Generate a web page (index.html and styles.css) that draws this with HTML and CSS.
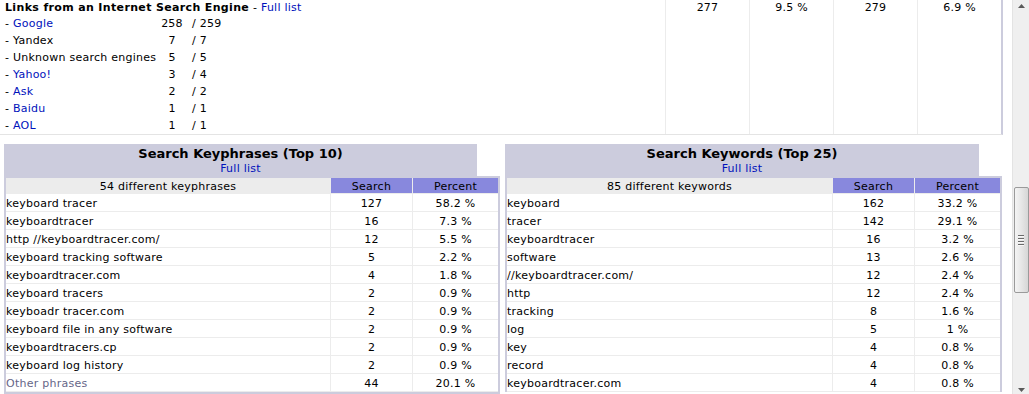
FILE: index.html
```html
<!DOCTYPE html>
<html>
<head>
<meta charset="utf-8">
<title>AWStats - Search</title>
<link rel="stylesheet" href="styles.css">
</head>
<body>
<div class="page">
  <div class="content">
    <section class="engines">
      <div class="eng-main">
        <div class="eng-head"><b>Links from an Internet Search Engine</b> - <a href="#">Full list</a></div>
        <div class="eng-row"><span class="eng-name">- <a href="#">Google</a></span><span class="eng-n">258</span><span class="eng-t">/ 259</span></div>
        <div class="eng-row"><span class="eng-name">- Yandex</span><span class="eng-n">7</span><span class="eng-t">/ 7</span></div>
        <div class="eng-row"><span class="eng-name">- Unknown search engines</span><span class="eng-n">5</span><span class="eng-t">/ 5</span></div>
        <div class="eng-row"><span class="eng-name">- <a href="#">Yahoo!</a></span><span class="eng-n">3</span><span class="eng-t">/ 4</span></div>
        <div class="eng-row"><span class="eng-name">- <a href="#">Ask</a></span><span class="eng-n">2</span><span class="eng-t">/ 2</span></div>
        <div class="eng-row"><span class="eng-name">- <a href="#">Baidu</a></span><span class="eng-n">1</span><span class="eng-t">/ 1</span></div>
        <div class="eng-row"><span class="eng-name">- <a href="#">AOL</a></span><span class="eng-n">1</span><span class="eng-t">/ 1</span></div>
      </div>
      <div class="eng-num">277</div>
      <div class="eng-num">9.5 %</div>
      <div class="eng-num">279</div>
      <div class="eng-num">6.9 %</div>
    </section>

    <div class="pair">
      <section class="box box-left">
        <div class="box-top">
          <div class="box-title"><div class="title-main">Search Keyphrases (Top 10)</div><div class="title-link"><a href="#">Full list</a></div></div>
          <div class="box-blank"></div>
        </div>
        <div class="data">
          <div class="cell hd name">54 different keyphrases</div><div class="cell hd num">Search</div><div class="cell hd num">Percent</div>
          <div class="cell name">keyboard tracer</div><div class="cell">127</div><div class="cell">58.2 %</div>
          <div class="cell name">keyboardtracer</div><div class="cell">16</div><div class="cell">7.3 %</div>
          <div class="cell name">http //keyboardtracer.com/</div><div class="cell">12</div><div class="cell">5.5 %</div>
          <div class="cell name">keyboard tracking software</div><div class="cell">5</div><div class="cell">2.2 %</div>
          <div class="cell name">keyboardtracer.com</div><div class="cell">4</div><div class="cell">1.8 %</div>
          <div class="cell name">keyboard tracers</div><div class="cell">2</div><div class="cell">0.9 %</div>
          <div class="cell name">keyboadr tracer.com</div><div class="cell">2</div><div class="cell">0.9 %</div>
          <div class="cell name">keyboard file in any software</div><div class="cell">2</div><div class="cell">0.9 %</div>
          <div class="cell name">keyboardtracers.cp</div><div class="cell">2</div><div class="cell">0.9 %</div>
          <div class="cell name">keyboard log history</div><div class="cell">2</div><div class="cell">0.9 %</div>
          <div class="cell name other">Other phrases</div><div class="cell">44</div><div class="cell">20.1 %</div>
        </div>
      </section>

      <section class="box box-right">
        <div class="box-top">
          <div class="box-title"><div class="title-main">Search Keywords (Top 25)</div><div class="title-link"><a href="#">Full list</a></div></div>
          <div class="box-blank"></div>
        </div>
        <div class="data data-open">
          <div class="cell hd name">85 different keywords</div><div class="cell hd num">Search</div><div class="cell hd num">Percent</div>
          <div class="cell name">keyboard</div><div class="cell">162</div><div class="cell">33.2 %</div>
          <div class="cell name">tracer</div><div class="cell">142</div><div class="cell">29.1 %</div>
          <div class="cell name">keyboardtracer</div><div class="cell">16</div><div class="cell">3.2 %</div>
          <div class="cell name">software</div><div class="cell">13</div><div class="cell">2.6 %</div>
          <div class="cell name">//keyboardtracer.com/</div><div class="cell">12</div><div class="cell">2.4 %</div>
          <div class="cell name">http</div><div class="cell">12</div><div class="cell">2.4 %</div>
          <div class="cell name">tracking</div><div class="cell">8</div><div class="cell">1.6 %</div>
          <div class="cell name">log</div><div class="cell">5</div><div class="cell">1 %</div>
          <div class="cell name">key</div><div class="cell">4</div><div class="cell">0.8 %</div>
          <div class="cell name">record</div><div class="cell">4</div><div class="cell">0.8 %</div>
          <div class="cell name">keyboardtracer.com</div><div class="cell">4</div><div class="cell">0.8 %</div>
        </div>
      </section>
    </div>
  </div>

  <div class="scrollbar">
    <div class="sb-btn sb-up"><svg width="7" height="4" viewBox="0 0 7 4"><path d="M0 4 L3.5 0 L7 4 Z" fill="#5a5a5a"/></svg></div>
    <div class="sb-thumb">
      <div class="grip"></div><div class="grip"></div><div class="grip"></div><div class="grip"></div>
    </div>
    <div class="sb-space"></div>
    <div class="sb-btn sb-down"><svg width="7" height="4" viewBox="0 0 7 4"><path d="M0 0 L3.5 4 L7 0 Z" fill="#5a5a5a"/></svg></div>
  </div>
</div>
</body>
</html>
```

FILE: styles.css
```css
html, body {
  margin: 0;
  padding: 0;
  height: 394px;
  overflow: hidden;
  background: #ffffff;
}

body {
  font: 11px "DejaVu Sans", Verdana, sans-serif;
  letter-spacing: 0.25px;
  color: #000000;
}

a {
  color: #0011bb;
  text-decoration: none;
}

.page {
  display: flex;
  height: 394px;
}

.content {
  width: 1012px;
  flex: none;
}

/* top: search engines */
.engines {
  display: grid;
  grid-template-columns: 665px repeat(4, 84px);
  width: 1001px;
  height: 134px;
  border-right: 2px solid #ccccdd;
  border-bottom: 1px solid #e4e4e4;
}

.eng-main {
  padding-left: 5px;
  white-space: nowrap;
}

.eng-head {
  line-height: 14px;
  padding-top: 1px;
  height: 13px;
}

.eng-head b {
  letter-spacing: 0.35px;
}

.eng-row {
  display: flex;
  line-height: 17px;
  height: 17px;
  padding-top: 1px;
  box-sizing: border-box;
}

.eng-row:first-of-type {
  margin-top: 0;
}

.eng-name {
  width: 156px;
}

.eng-n {
  width: 22px;
  text-align: center;
}

.eng-t {
  padding-left: 9px;
}

.eng-num {
  border-left: 1px solid #ececec;
  text-align: center;
  line-height: 14px;
  padding-top: 1px;
}

/* bottom: two boxes */
.pair {
  display: flex;
  gap: 5px;
  padding: 9px 0 0 4px;
}

.box {
  flex: none;
}

.box-left {
  width: 496px;
}

.box-right {
  width: 497px;
}

.box-top {
  display: flex;
  height: 32px;
}

.box-title {
  flex: 1;
  background: #ccccdd;
  text-align: center;
  padding-top: 2px;
  box-sizing: border-box;
}

.title-main {
  font-size: 13px;
  font-weight: bold;
  line-height: 16px;
  letter-spacing: 0;
}

.title-link {
  line-height: 13px;
}

.box-blank {
  width: 23px;
}

.data {
  display: grid;
  grid-template-columns: 1fr 82px 85px;
  border: 2px solid #ccccdd;
}

.data-open {
  border-bottom: none;
}

.cell {
  height: 16px;
  padding-top: 1px;
  line-height: 17px;
  text-align: center;
  white-space: nowrap;
  overflow: hidden;
  border-right: 1px solid #ececec;
  border-bottom: 1px solid #ececec;
}

.cell:nth-child(3n) {
  border-right: none;
}

.cell.name {
  text-align: left;
}

.cell.other {
  color: #666688;
}

.cell.hd {
  height: 14px;
  line-height: 15px;
}

.cell.hd.name {
  background: #ececec;
  text-align: center;
}

.cell.hd.num {
  background: #8888dd;
}

/* fake window scrollbar */
.scrollbar {
  width: 17px;
  flex: none;
  height: 394px;
  box-sizing: border-box;
  background: #efefef;
  border-left: 1px solid #e3e3e3;
  display: flex;
  flex-direction: column;
  align-items: center;
}

.sb-btn {
  height: 12px;
  width: 100%;
  flex: none;
  display: flex;
  justify-content: center;
}

.sb-up {
  align-items: flex-start;
  padding-top: 4px;
  box-sizing: border-box;
}

.sb-down {
  align-items: flex-end;
  padding-bottom: 2px;
  box-sizing: border-box;
}

.sb-thumb {
  margin-top: 175px;
  height: 106px;
  width: 15px;
  flex: none;
  box-sizing: border-box;
  border: 1px solid #9a9a9a;
  border-radius: 2px;
  background: linear-gradient(to right, #f4f4f4, #e6e6e6 50%, #d6d6d6);
  display: flex;
  flex-direction: column;
  align-items: center;
  justify-content: center;
  gap: 1px;
}

.grip {
  width: 6px;
  height: 1px;
  background: #6a6a6a;
  border-bottom: 1px solid #f8f8f8;
}

.sb-space {
  flex: 1;
}
```
